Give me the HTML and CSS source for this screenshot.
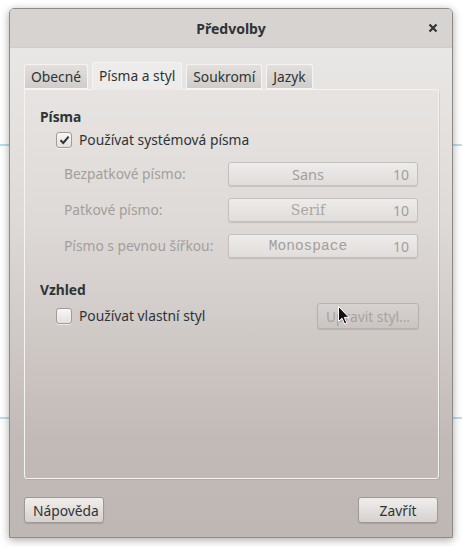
FILE: index.html
```html
<!DOCTYPE html>
<html>

<head>
  <title>Předvolby</title>
  <meta charset="utf-8">
  <link rel="stylesheet" href="styles.css">
</head>

<body>
  <div class="window">
    <div class="titlebar">
      <span></span>
      <h1>Předvolby</h1>
      <button class="close">
        <svg width="10" height="10" viewBox="0 0 10 10"><path d="M1.5 1.5 L8.5 8.5 M8.5 1.5 L1.5 8.5" stroke="#2e3436" stroke-width="2.2"/></svg>
      </button>
    </div>

    <div class="content">
      <div class="tabs">
        <div class="tab">Obecné</div>
        <div class="tab active">Písma a styl</div>
        <div class="tab">Soukromí</div>
        <div class="tab">Jazyk</div>
      </div>

      <div class="panel">
        <h3>Písma</h3>
        <label class="check-row">
          <span class="checkbox checked">
            <svg width="11" height="10" viewBox="0 0 11 10"><path d="M1.5 5.2 L4.3 8 L9.6 1.6" fill="none" stroke="#2e3436" stroke-width="2"/></svg>
          </span>
          Používat systémová písma
        </label>

        <div class="font-rows">
          <span class="font-label">Bezpatkové písmo:</span>
          <button class="font-button" disabled><span class="name">Sans</span><span class="size">10</span></button>
          <span class="font-label">Patkové písmo:</span>
          <button class="font-button" disabled><span class="name serif">Serif</span><span class="size">10</span></button>
          <span class="font-label">Písmo s pevnou šířkou:</span>
          <button class="font-button" disabled><span class="name mono">Monospace</span><span class="size">10</span></button>
        </div>

        <h3 class="second">Vzhled</h3>
        <div class="style-row">
          <label class="check-row">
            <span class="checkbox"></span>
            Používat vlastní styl
          </label>
          <button class="button" disabled>Upravit styl...</button>
        </div>
      </div>

      <div class="actions">
        <button class="button">Nápověda</button>
        <button class="button">Zavřít</button>
      </div>
    </div>

    <svg class="cursor" width="12" height="19" viewBox="0 0 12 19">
      <path d="M0.5 0.5 L0.5 15.5 L4 12.2 L6.6 18 L8.8 17 L6.3 11.4 L11 11.4 Z" fill="#111" stroke="#fff" stroke-width="1"/>
    </svg>
  </div>
</body>

</html>
```

FILE: styles.css
```css
body {
  margin: 0;
  width: 462px;
  height: 547px;
  font-family: "Noto Sans", "DejaVu Sans", sans-serif;
  font-size: 13.8px;
  color: #2e3436;
  background:
    linear-gradient(to bottom, transparent 144px, #b9def0 144px, #b9def0 146px, transparent 146px,
      transparent 417px, #b9def0 417px, #b9def0 419px, transparent 419px),
    #ffffff;
  overflow: hidden;
}

.window {
  position: relative;
  box-sizing: border-box;
  width: 444px;
  height: 530px;
  margin: 8px 0 0 9px;
  border: 1px solid #8e8a88;
  border-radius: 5px 5px 0 0;
  box-shadow: 0 2px 9px rgba(0, 0, 0, 0.35);
  display: flex;
  flex-direction: column;
  overflow: hidden;
}

.titlebar {
  height: 38px;
  flex: none;
  display: grid;
  grid-template-columns: 1fr auto 1fr;
  align-items: center;
  background-color: #d7d3d0;
  border-bottom: 1px solid #d0ccc9;
}

.titlebar h1 {
  margin: 0;
  font-size: 14px;
  font-weight: bold;
  color: #2e3436;
}

.close {
  justify-self: end;
  display: flex;
  margin-right: 14px;
  padding: 0;
  border: none;
  background: none;
}

.content {
  flex: 1;
  display: flex;
  flex-direction: column;
  padding: 13px 13px 14px 14px;
  background: linear-gradient(to bottom, #e9e7e5 0%, #dedad8 35%, #c2bab7 80%, #bfb7b4 100%);
}

.tabs {
  display: flex;
  align-items: flex-end;
  gap: 4px;
  height: 28px;
}

.tab {
  box-sizing: border-box;
  height: 25px;
  padding: 2px 6px 0 6px;
  border: 1px solid #f6f4f3;
  border-bottom: none;
  border-radius: 3px 3px 0 0;
  background: linear-gradient(to bottom, #e2dfdd, #cfcbc8);
  box-shadow: inset 0 -1px 0 #f6f4f3;
}

.tab.active {
  height: 28px;
  padding: 3px 6px 0 6px;
  background: #eeecea;
  box-shadow: none;
  position: relative;
  z-index: 1;
  margin-bottom: -1px;
}

.panel {
  flex: 1;
  box-sizing: border-box;
  padding: 18px 19px 0 15px;
  border: 1px solid #f6f4f3;
  border-radius: 0 3px 3px 3px;
  box-shadow: 1px 1px 0 rgba(0, 0, 0, 0.08);
  line-height: 18px;
}

.panel h3 {
  margin: 0;
  font-size: 13.8px;
  font-weight: bold;
  line-height: 18px;
}

.panel h3.second {
  margin-top: 23px;
}

.check-row {
  display: flex;
  align-items: center;
  gap: 7px;
  margin: 5px 0 0 16px;
}

.checkbox {
  box-sizing: border-box;
  width: 16px;
  height: 16px;
  display: flex;
  align-items: center;
  justify-content: center;
  border: 1px solid #a19c99;
  border-radius: 3px;
  background: linear-gradient(to bottom, #f8f7f6, #e3e0de);
  box-shadow: 0 1px 0 rgba(255, 255, 255, 0.6);
}

.font-rows {
  display: grid;
  grid-template-columns: 164px 190px;
  row-gap: 12px;
  align-items: center;
  margin: 13px 0 0 24px;
}

.font-label {
  color: #a29e9b;
}

.font-button,
.button {
  box-sizing: border-box;
  height: 24px;
  border: 1px solid #aaa5a2;
  border-radius: 3px;
  background: linear-gradient(to bottom, #f3f2f1, #dedbd9);
  box-shadow: 0 1px 1px rgba(0, 0, 0, 0.12);
  font-family: "Noto Sans", "DejaVu Sans", sans-serif;
  font-size: 13.8px;
  color: #2e3436;
  padding: 0 8px;
  white-space: nowrap;
}

.font-button {
  display: flex;
  align-items: center;
  justify-content: space-between;
  color: #a29e9b;
  border-color: #c4c0bd;
  background: linear-gradient(to bottom, #eeecea, #e0dddb);
}

.font-button .name {
  flex: 1;
  text-align: center;
  padding-right: 14px;
  font-size: 14.5px;
}

.font-button .name.serif {
  font-family: "DejaVu Serif", serif;
  font-size: 14px;
  color: #aaa6a3;
}

.font-button .name.mono {
  font-family: "Liberation Mono", monospace;
  font-size: 14.5px;
}

.font-button .size {
  font-size: 14px;
}

.style-row {
  display: flex;
  align-items: center;
  justify-content: space-between;
  margin-top: 4px;
}

.style-row .check-row {
  margin-top: 0;
}

.style-row .button {
  width: 102px;
  height: 26px;
  padding: 0 4px;
  color: #a8a3a0;
  border-color: #b8b2af;
  background: linear-gradient(to bottom, #d7d2cf, #cbc5c2);
}

.actions {
  display: flex;
  justify-content: space-between;
  margin-top: 18px;
  padding-right: 1px;
}

.actions .button {
  width: 80px;
  height: 26px;
  background: linear-gradient(to bottom, #f0eeec, #d6d1ce);
  border-color: #9e9896;
}

.cursor {
  position: absolute;
  left: 328px;
  top: 297px;
}
```
